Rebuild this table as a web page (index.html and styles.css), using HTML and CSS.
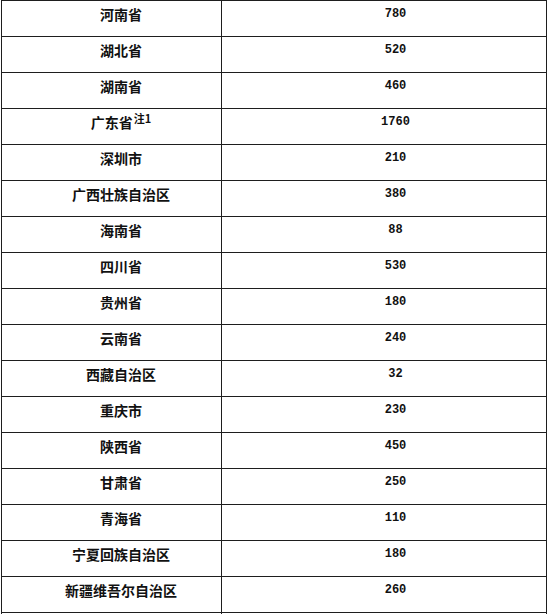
FILE: index.html
```html
<!DOCTYPE html>
<html lang="zh-CN">
<head>
<meta charset="utf-8">
<title>表格</title>
<link rel="stylesheet" href="styles.css">
</head>
<body>
<div class="sheet">
  <div class="cell name">河南省</div><div class="cell num">780</div>
  <div class="cell name">湖北省</div><div class="cell num">520</div>
  <div class="cell name">湖南省</div><div class="cell num">460</div>
  <div class="cell name">广东省<sup class="note">注1</sup></div><div class="cell num">1760</div>
  <div class="cell name">深圳市</div><div class="cell num">210</div>
  <div class="cell name">广西壮族自治区</div><div class="cell num">380</div>
  <div class="cell name">海南省</div><div class="cell num">88</div>
  <div class="cell name">四川省</div><div class="cell num">530</div>
  <div class="cell name">贵州省</div><div class="cell num">180</div>
  <div class="cell name">云南省</div><div class="cell num">240</div>
  <div class="cell name">西藏自治区</div><div class="cell num">32</div>
  <div class="cell name">重庆市</div><div class="cell num">230</div>
  <div class="cell name">陕西省</div><div class="cell num">450</div>
  <div class="cell name">甘肃省</div><div class="cell num">250</div>
  <div class="cell name">青海省</div><div class="cell num">110</div>
  <div class="cell name">宁夏回族自治区</div><div class="cell num">180</div>
  <div class="cell name">新疆维吾尔自治区</div><div class="cell num">260</div>
  <div class="cell name"></div><div class="cell num"></div>
</div>
</body>
</html>
```

FILE: styles.css
```css
html, body {
  margin: 0;
  padding: 0;
  background: #ffffff;
  overflow: hidden;
}

body {
  font-family: "Noto Sans CJK SC", "DejaVu Sans", sans-serif;
  color: #111111;
}

.sheet {
  display: grid;
  grid-template-columns: 220px 325px;
  grid-auto-rows: 36px;
  width: 546px;
  margin-left: 1px;
  border-left: 1px solid #1e1e1e;
  border-top: 1px solid #1e1e1e;
  box-sizing: border-box;
}

.cell {
  box-sizing: border-box;
  border-right: 1px solid #1e1e1e;
  border-bottom: 1px solid #1e1e1e;
  text-align: center;
  line-height: 20px;
  white-space: nowrap;
}

.name {
  font-size: 14px;
  font-weight: 700;
  padding: 3px 0 0 19px;
}

.num {
  font-family: "Liberation Mono", "DejaVu Sans Mono", monospace;
  font-size: 12px;
  font-weight: 700;
  padding: 3px 0 0 23px;
}

.note {
  font-size: 11px;
  line-height: 0;
  vertical-align: 5px;
  margin-left: 1px;
}
```
